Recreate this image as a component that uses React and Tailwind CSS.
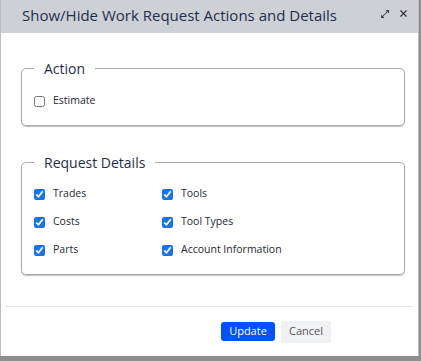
import { X } from 'lucide-react';

const Check = ({ label, checked }) => (
  <label className="flex items-center h-[16px] gap-[8px] text-[10.5px] text-[#1f2937]">
    <input
      type="checkbox"
      defaultChecked={checked}
      className="w-[11px] h-[11px] m-0 accent-[#1a73e8]"
    />
    <span>{label}</span>
  </label>
);

const Group = ({ title, children, className }) => (
  <fieldset
    className={`w-[384px] border border-[#a9a9a9] rounded-[5px] shadow-[0_1px_1px_rgba(0,0,0,0.25)] px-[12px] ${className}`}
  >
    <legend className="px-[10px] text-[14px] leading-[18px] pt-[2px] text-[#1f2d4d]">{title}</legend>
    {children}
  </fieldset>
);

const ExpandIcon = () => (
  <svg width="8" height="8" viewBox="0 0 8 8" fill="#444">
    <path d="M8 0 L8 3.5 L6.6 2.1 L2.1 6.6 L3.5 8 L0 8 L0 4.5 L1.4 5.9 L5.9 1.4 L4.5 0 Z" />
  </svg>
);

export default function App() {
  return (
    <div
      className="w-[421px] h-[361px] bg-[#8e8e8e] overflow-hidden"
      style={{ fontFamily: '"Open Sans", sans-serif' }}
    >
      <div className="w-[419px] h-[356px] bg-white border-l border-r border-[#b9bdc2] flex flex-col">
        {/* header */}
        <div className="h-[33px] bg-[#cdd1d6] flex items-start justify-between pl-[21px] pr-[9px] pt-[5px] shrink-0">
          <h1 className="text-[15px] leading-[20px] text-[#1f2d4d]">Show/Hide Work Request Actions and Details</h1>
          <div className="flex items-center gap-[9px] text-[#333] pt-[3px]">
            <ExpandIcon />
            <X className="w-[11px] h-[11px]" strokeWidth={2.5} />
          </div>
        </div>

        {/* body */}
        <div className="flex-1 px-[20px] pt-[25px]">
          <Group title="Action" className="h-[68px] pt-[15px]">
            <Check label="Estimate" />
          </Group>

          <Group title="Request Details" className="h-[123px] mt-[26px] pt-[14px]">
            <div className="grid grid-cols-[128px_1fr] gap-y-[12px]">
              <Check label="Trades" checked />
              <Check label="Tools" checked />
              <Check label="Costs" checked />
              <Check label="Tool Types" checked />
              <Check label="Parts" checked />
              <Check label="Account Information" checked />
            </div>
          </Group>
        </div>

        {/* footer */}
        <div className="mx-[5px] border-t border-[#e3e3e3] h-[50px] flex items-center justify-end gap-[6px] pr-[82px] shrink-0">
          <button className="w-[54px] h-[19px] rounded-[3px] bg-[#0052ff] text-white text-[11px]">Update</button>
          <button className="w-[50px] h-[22px] rounded-[3px] bg-[#f0f1f3] text-[#555] text-[11px]">Cancel</button>
        </div>
      </div>
    </div>
  );
}
